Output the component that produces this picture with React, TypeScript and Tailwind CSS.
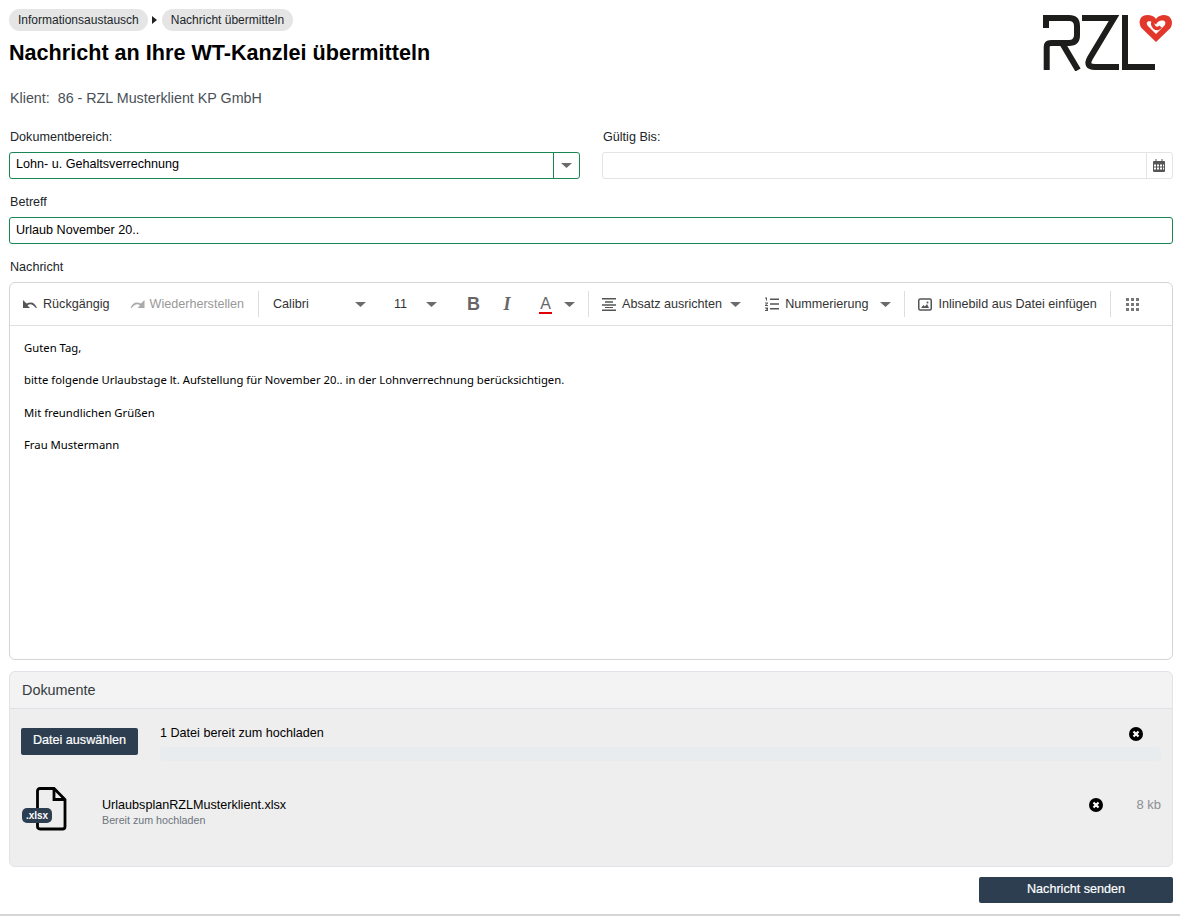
function Caret({ className = "" }: { className?: string }) {
  return (
    <svg width="11" height="5" viewBox="0 0 11 5" className={className}>
      <path d="M0 0 H11 L5.500 5Z" fill="#6b6b6b" />
    </svg>
  );
}

function Divider() {
  return <span className="h-[26px] w-px bg-[#dedede]" />;
}

function RzlLogo() {
  return (
    <svg width="130" height="57" viewBox="0 0 130 57" fill="none">
      <g stroke="#1d1d1b" strokeWidth="6">
        <path d="M3 14 V4 H26 Q34 4 34 12 V21 Q34 29 26 29 H8 Q3.700 29 3.700 33 V56" />
        <path d="M19 29 L35 56" />
        <path d="M39 4 H71 L47 44 Q42 53 52 53 H76" />
        <path d="M82 1 V53 H112" />
      </g>
      {/* Heart with the white inner heart and the red swirl */}
      <path
        d="M113 28 L98.500 14 C94.500 8 97 1 104.500 1 C108 1 111 2 113 5 C115 2 118 1 121 1 C128 1 131 8 127.500 14 Z"
        fill="#e2372b"
      />
      <path
        d="M113 20 L104.500 11.500 C102.500 8 105 6.500 108 7.500 C110.500 8.500 112 9.500 113 10.500 C114 8.500 116 6.500 119 6.500 C122 6.500 123.500 8.500 121.500 11.500 Z"
        fill="#fff"
      />
      <path d="M111.500 5 Q108 10 111.500 13.500 Q115 16 117.500 12.500" stroke="#e2372b" strokeWidth="3.500" />
    </svg>
  );
}

function CloseCircle() {
  return (
    <svg width="14" height="14" viewBox="0 0 14 14">
      <circle cx="7" cy="7" r="7" fill="#000" />
      <path d="M4.500 4.500 L9.500 9.500 M9.500 4.500 L4.500 9.500" stroke="#fff" strokeWidth="2.200" />
    </svg>
  );
}

export default function App() {
  return (
    <div className="h-[919px] w-[1180px] overflow-hidden bg-white font-['Liberation_Sans',Arial,sans-serif] text-[12.6px] text-[#212529]">
      <div className="pl-[9px] pr-[7px] pt-[9px]">
        <div className="flex justify-between">
          <div>
            <div className="flex items-center gap-[4px] text-[12px] text-[#212529]">
              <span className="flex h-[22px] items-center rounded-full bg-[#e5e5e5] px-[9px]">Informationsaustausch</span>
              <svg width="6" height="8" viewBox="0 0 6 8">
                <path d="M0 0 L5 4 L0 8Z" fill="#222" />
              </svg>
              <span className="flex h-[22px] items-center rounded-full bg-[#e5e5e5] px-[9px]">Nachricht übermitteln</span>
            </div>
            <h1 className="mt-[7px] text-[21.6px] font-bold leading-[30px] text-black">Nachricht an Ihre WT-Kanzlei übermitteln</h1>
          </div>
          <div className="mt-[5px]">
            <RzlLogo />
          </div>
        </div>

        <div className="mt-[17px] pl-px text-[14.3px] leading-[20px] text-[#495057]">
          Klient:&nbsp; 86 - RZL Musterklient KP GmbH
        </div>

        <div className="mt-[20px] flex gap-[22px]">
          <div className="w-[571px]">
            <label className="block pl-px leading-[18px]">Dokumentbereich:</label>
            <div className="mt-[6px] flex h-[27px] items-stretch rounded-[3px] border border-[#198754]">
              <div className="flex-1 pl-[6px] pt-[3px] leading-[17px] text-black">Lohn- u. Gehaltsverrechnung</div>
              <div className="flex w-[26px] items-center justify-center border-l border-[#198754]">
                <Caret />
              </div>
            </div>
          </div>
          <div className="flex-1">
            <label className="block pl-px leading-[18px]">Gültig Bis:</label>
            <div className="mt-[6px] flex h-[27px] justify-end rounded-[3px] border border-[#e3e3e8]">
              <div className="flex w-[26px] items-center justify-center border-l border-[#e3e3e8] pr-[2px]">
                <svg width="12" height="13" viewBox="0 0 12 13" fill="#555">
                  <path d="M2.500 0h1v2h5V0h1v2H11a1 1 0 0 1 1 1v9a1 1 0 0 1-1 1H1a1 1 0 0 1-1-1V3a1 1 0 0 1 1-1h1.500z" />
                  <path d="M1 5.500h2v2H1zM4 5.500h2v2H4zM7 5.500h2v2H7zM10 5.500h1v2h-1zM1 8.500h2v2H1zM4 8.500h2v2H4zM7 8.500h2v2H7zM10 8.500h1v2h-1z" fill="#fff" />
                </svg>
              </div>
            </div>
          </div>
        </div>

        <label className="mt-[14px] block pl-px leading-[18px]">Betreff</label>
        <div className="mt-[6px] flex h-[27px] rounded-[3px] border border-[#198754] pl-[6px] pt-[4px] leading-[17px] text-black">
          Urlaub November 20..
        </div>

        <label className="mt-[14px] block pl-px leading-[18px]">Nachricht</label>
        <div className="mt-[6px] h-[378px] rounded-[6px] border border-[#d4d4d4]">
          <div className="flex h-[43px] items-center border-b border-[#e0e0e0] pl-[13px] text-[#333]">
            <svg width="14" height="10" viewBox="0 0 14 10" fill="#555">
              <path d="M0 1v8h7L4.500 6.500Q8 3 13 9h1Q11 1 3.500 4.500L1.500 2.500z" />
            </svg>
            <span className="ml-[6px]">Rückgängig</span>
            <svg width="15" height="10" viewBox="0 0 14 10" fill="#aaa" className="ml-[20px]">
              <path d="M14 1v8H7L9.500 6.500Q6 3 1 9H0Q3 1 10.500 4.500L12.500 2.500z" />
            </svg>
            <span className="ml-[5px] text-[#999]">Wiederherstellen</span>
            <span className="ml-[14px] flex"><Divider /></span>
            <span className="ml-[14px] w-[82px]">Calibri</span>
            <Caret />
            <span className="ml-[28px] w-[32px]">11</span>
            <Caret />
            <span className="ml-[30px] w-[12px] text-[18px] font-bold leading-none text-[#666]">B</span>
            <span className="ml-[22px] w-[12px] text-center font-['Liberation_Serif',serif] text-[18px] font-bold italic leading-none text-[#666]">I</span>
            <span className="relative ml-[26px] w-[13px] text-center text-[16px] leading-none text-[#666]">
              A
              <span className="absolute -bottom-[2px] left-0 h-[2px] w-[13px] bg-[#e00000]" />
            </span>
            <Caret className="ml-[12px]" />
            <span className="ml-[13px] flex"><Divider /></span>
            <svg width="14" height="14" viewBox="0 0 14 14" className="ml-[13px]" fill="#555">
              <path d="M0 1h14v1.500H0zM3 4.300h8v1.500H3zM0 7.300h14v1.500H0zM3 10h8v1H3zM0 12.500h14V14H0z" />
            </svg>
            <span className="ml-[6px]">Absatz ausrichten</span>
            <Caret className="ml-[8px]" />
            <svg width="14" height="14" viewBox="0 0 14 14" className="ml-[24px]" fill="#555">
              <path d="M0 0.500h2v3H1V1.500H0zM0 5.500h3v1l-2 1.500h2v1H0V8l2-1.500H0zM0 10.500h3v3.500H0v-1h2v-.5H1v-1h1V11.500H0z" />
              <path d="M5 1.500h9V3H5zM5 6.300h9v1.500H5zM5 11h9v1.500H5z" />
            </svg>
            <span className="ml-[6px]">Nummerierung</span>
            <Caret className="ml-[12px]" />
            <span className="ml-[13px] flex"><Divider /></span>
            <svg width="14" height="13" viewBox="0 0 14 13" className="ml-[13px]">
              <rect x="0.750" y="1" width="12.500" height="11" rx="1.500" fill="none" stroke="#555" strokeWidth="1.500" />
              <path d="M3 10l2.500-3 1.500 1.500 2-2.500 2 4z" fill="#555" />
              <circle cx="9.500" cy="4.500" r="1" fill="#555" />
            </svg>
            <span className="ml-[6px]">Inlinebild aus Datei einfügen</span>
            <span className="ml-[13px] flex"><Divider /></span>
            <svg width="13" height="13" viewBox="0 0 13 13" className="ml-[15px]" fill="#777">
              <path d="M0 0h3v3H0zM5 0h3v3H5zM10 0h3v3h-3zM0 5h3v3H0zM5 5h3v3H5zM10 5h3v3h-3zM0 10h3v3H0zM5 10h3v3H5zM10 10h3v3h-3z" />
            </svg>
          </div>
          <div className="flex flex-col gap-[16.3px] pl-[14px] pt-[14px] font-['Noto_Sans',sans-serif] text-[11.3px] leading-[16px] text-black">
            <p>Guten Tag,</p>
            <p>bitte folgende Urlaubstage lt. Aufstellung für November 20.. in der Lohnverrechnung berücksichtigen.</p>
            <p>Mit freundlichen Grüßen</p>
            <p>Frau Mustermann</p>
          </div>
        </div>

        <div className="mt-[11px] h-[196px] rounded-[6px] border border-[#e2e3e8] bg-[#eeeeee]">
          <div className="flex h-[37px] items-center rounded-t-[6px] border-b border-[#dee2e6] bg-[#f3f3f3] pl-[12px] pt-px text-[14.4px] text-[#343a40]">
            Dokumente
          </div>
          <div className="flex px-[11px] pt-[19px]">
            <button className="h-[27px] w-[117px] rounded-[2px] bg-[#2c3e50] pb-[2px] text-[12.6px] text-white [-webkit-text-stroke:0.2px_#fff]">Datei auswählen</button>
            <div className="ml-[22px] flex-1">
              <div className="flex h-[19px] justify-between pr-[18px] leading-[16px] text-black">
                <span className="-mt-[3px]">1 Datei bereit zum hochladen</span>
                <span className="-mt-[1px]"><CloseCircle /></span>
              </div>
              <div className="h-[14px] rounded-[4px] bg-[#e9ecef]" />
            </div>
          </div>
          <div className="flex pl-[12px] pr-[11px] pt-[26px]">
            <div className="relative h-[44px] w-[80px]">
              <svg width="32" height="44" viewBox="0 0 32 44" className="absolute left-[13px] top-0" fill="none">
                <path d="M2.500 23V4Q2.500 1.500 5 1.500H19L30 12.500V39.500Q30 42 27.500 42H5Q2.500 42 2.500 39.500V36" stroke="#000" strokeWidth="2.800" />
                <path d="M19 1.500V12.500H30" stroke="#000" strokeWidth="2.800" />
              </svg>
              <span className="absolute left-0 top-[21px] flex h-[15px] w-[30px] items-center justify-center rounded-[5px] bg-[#2c3e50] text-[10px] font-bold leading-none text-white">
                .xlsx
              </span>
            </div>
            <div className="pt-[11px]">
              <div className="leading-[15px] text-black">UrlaubsplanRZLMusterklient.xlsx</div>
              <div className="text-[10.700px] leading-[14px] text-[#6c757d]">Bereit zum hochladen</div>
            </div>
            <div className="ml-auto mt-[10px] flex items-start gap-[33px]">
              <span className="mt-[1px]"><CloseCircle /></span>
              <span className="text-[13px] leading-[15px] text-[#8a8f94]">8 kb</span>
            </div>
          </div>
        </div>

        <div className="mt-[10px] flex justify-end">
          <button className="h-[26px] w-[194px] rounded-[2px] bg-[#2c3e50] pb-[2px] text-[12.6px] text-white [-webkit-text-stroke:0.2px_#fff]">Nachricht senden</button>
        </div>
      </div>
      <div className="mt-[11px] h-[2px] bg-[#d6d6d6]" />
    </div>
  );
}
